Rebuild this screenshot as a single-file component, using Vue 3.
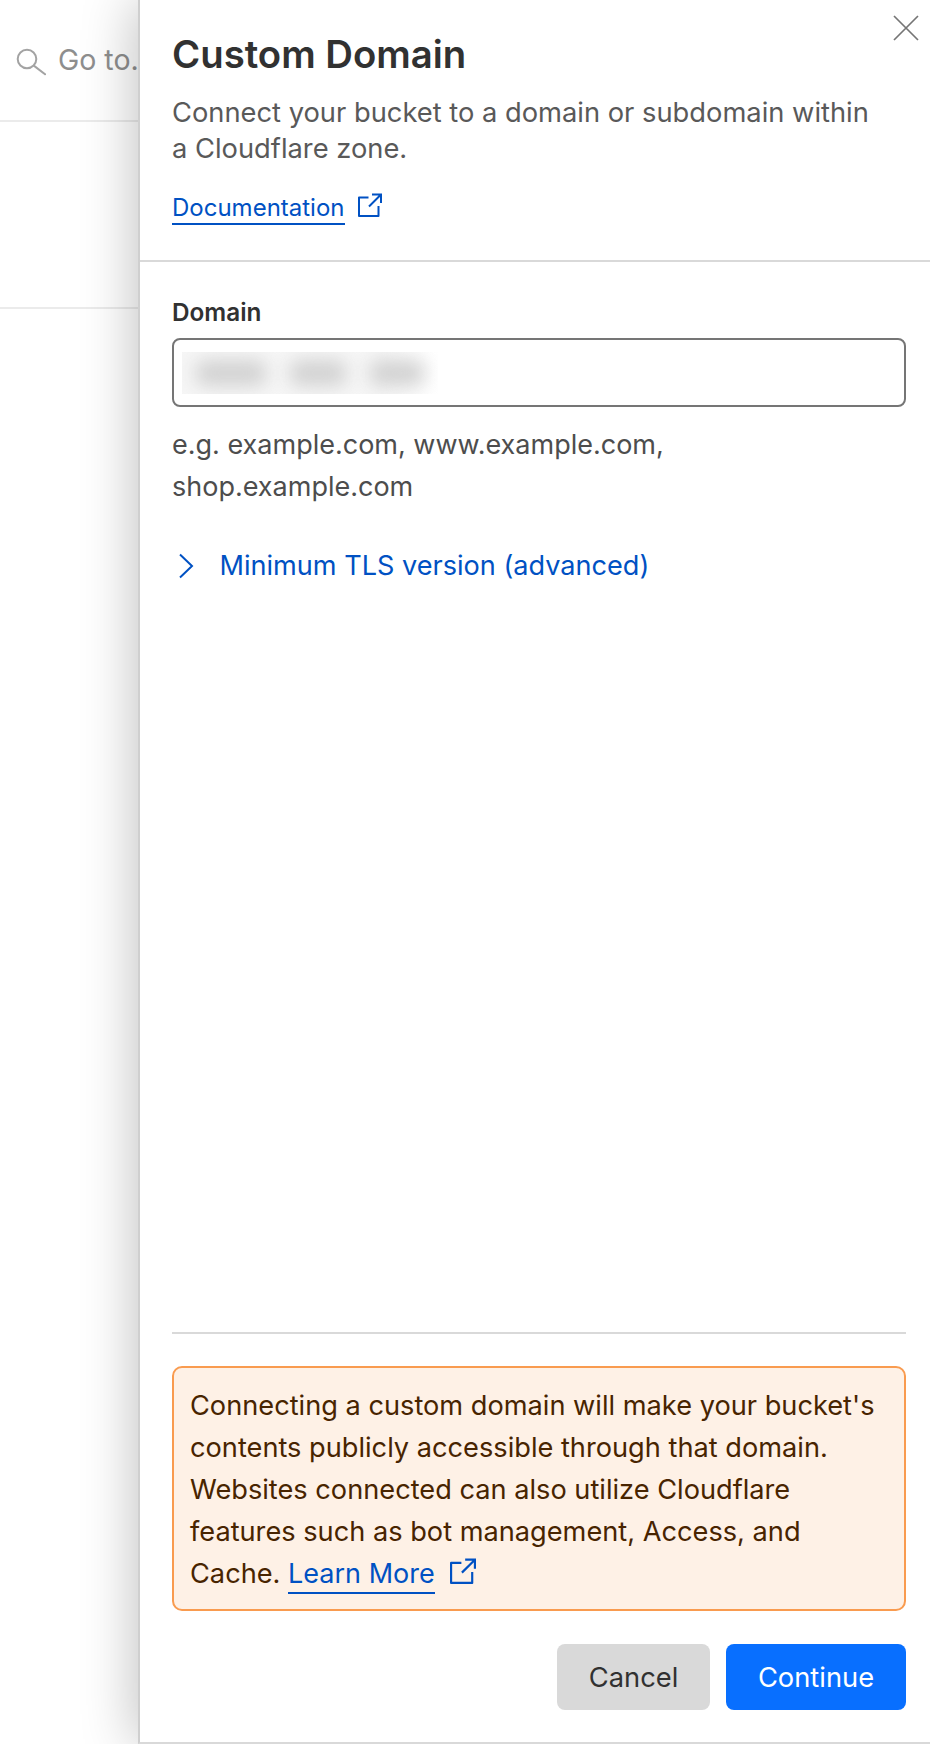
<script setup>
const alertLines = [
  "Connecting a custom domain will make your bucket's",
  'contents publicly accessible through that domain.',
  'Websites connected can also utilize Cloudflare',
  'features such as bot management, Access, and',
]
</script>

<template>
  <div class="page">
    <div class="backdrop">
      <div class="search">
        <svg class="search-icon" width="30" height="30" viewBox="0 0 30 30" fill="none">
          <circle cx="11" cy="13" r="9.3" stroke="#a3a3a3" stroke-width="2" />
          <path d="M17.8 19.6 L29.7 28.7" stroke="#a3a3a3" stroke-width="2" />
        </svg>
        <span class="search-text">Go to.</span>
      </div>
      <div class="back-row"></div>
    </div>

    <aside class="panel">
      <button class="close" aria-label="Close">
        <svg width="26" height="26" viewBox="0 0 26 26" fill="none">
          <path d="M1 1 L25 25 M25 1 L1 25" stroke="#757575" stroke-width="1.7" />
        </svg>
      </button>

      <header class="head">
        <h1>Custom Domain</h1>
        <p class="desc">Connect your bucket to a domain or subdomain within<br />a Cloudflare zone.</p>
        <div class="doc-row">
          <a class="link doc">Documentation</a>
          <svg class="ext" width="24" height="24" viewBox="0 0 24 24" fill="none">
            <path d="M10.5 4.5 H1 V23 H20.5 V13" stroke="#0051c3" stroke-width="2" stroke-linejoin="round" />
            <path d="M11 13.5 L22.5 2 M14 1.5 H23 V10" stroke="#0051c3" stroke-width="2" />
          </svg>
        </div>
      </header>

      <main class="form">
        <label class="label">Domain</label>
        <div class="input">
          <div class="redacted"><i class="a"></i><i class="b"></i><i class="c"></i></div>
        </div>
        <p class="hint">e.g. example.com, www.example.com,<br />shop.example.com</p>
        <div class="advanced">
          <svg width="16" height="26" viewBox="0 0 16 26" fill="none">
            <path d="M2 1.5 L14 13 L2 24.5" stroke="#0051c3" stroke-width="2" />
          </svg>
          <span>Minimum TLS version (advanced)</span>
        </div>
      </main>

      <footer class="foot">
        <div class="alert">
          <template v-for="l in alertLines" :key="l">{{ l }}<br /></template>
          Cache. <a class="link learn">Learn More</a>
          <svg class="ext ext-alert" width="26" height="26" viewBox="0 0 24 24" fill="none">
            <path d="M10.5 4.5 H1 V23 H20.5 V13" stroke="#0051c3" stroke-width="2" stroke-linejoin="round" />
            <path d="M11 13.5 L22.5 2 M14 1.5 H23 V10" stroke="#0051c3" stroke-width="2" />
          </svg>
        </div>
        <div class="actions">
          <button class="btn cancel">Cancel</button>
          <button class="btn primary">Continue</button>
        </div>
      </footer>
    </aside>
  </div>
</template>

<style>
html, body { margin: 0; background: #fff; }
</style>

<style scoped>
.page {
  width: 930px;
  height: 1744px;
  display: flex;
  overflow: hidden;
  background: #fff;
  font-family: Inter, "Liberation Sans", sans-serif;
  color: #313131;
}
.backdrop {
  width: 138px;
  flex: none;
  overflow: hidden;
}
.search {
  height: 122px;
  box-sizing: border-box;
  border-bottom: 2px solid #ebebeb;
  width: 138px;
  padding: 46px 0 0 16px;
  display: flex;
  align-items: flex-start;
  gap: 12px;
  white-space: nowrap;
}
.search-icon { flex: none; }
.search-text {
  font-size: 28.5px;
  line-height: 28px;
  color: #8e8e8e;
}
.back-row {
  height: 187px;
  box-sizing: border-box;
  border-bottom: 2px solid #ebebeb;
}
.panel {
  position: relative;
  width: 792px;
  height: 1744px;
  flex: none;
  box-sizing: border-box;
  background: #fff;
  border-left: 2px solid #cfcfcf;
  border-bottom: 2px solid #d9d9d9;
  box-shadow: -4px 0 50px rgba(0, 0, 0, 0.24);
  display: flex;
  flex-direction: column;
}
.close {
  position: absolute;
  top: 15px;
  right: 11px;
  padding: 0;
  border: 0;
  background: none;
  display: flex;
}
.head {
  height: 262px;
  flex: none;
  box-sizing: border-box;
  border-bottom: 2px solid #d9d9d9;
  padding: 31px 24px 0 32px;
}
h1 {
  margin: 0;
  font-size: 38.3px;
  line-height: 46px;
  font-weight: 600;
  color: #313131;
}
.desc {
  margin: 18px 0 0;
  font-size: 27.3px;
  line-height: 36px;
  color: #595959;
}
.doc-row {
  margin-top: 24px;
  display: flex;
  align-items: flex-start;
  gap: 13px;
}
.link { color: #0051c3; }
.doc {
  font-size: 24px;
  line-height: 33px;
  height: 32px;
  border-bottom: 2px solid #0051c3;
}
.doc-row .ext { margin-top: 2px; }
.form {
  flex: 1;
  padding: 36px 24px 0 32px;
  display: flex;
  flex-direction: column;
}
.label {
  font-size: 24.3px;
  line-height: 28px;
  font-weight: 600;
  color: #313131;
}
.input {
  margin-top: 12px;
  height: 69px;
  box-sizing: border-box;
  border: 2px solid #757575;
  border-radius: 8px;
  position: relative;
}
.redacted {
  position: absolute;
  left: 8px;
  top: 12px;
  width: 256px;
  height: 42px;
  background: linear-gradient(90deg, #f6f6f6 78%, #fff 100%);
  overflow: hidden;
  display: flex;
  align-items: center;
  gap: 22px;
  padding-left: 13px;
  box-sizing: border-box;
}
.redacted i {
  display: block;
  flex: none;
  height: 26px;
  background: #d2d2d2;
  border-radius: 12px;
  filter: blur(9px);
}
.redacted .a { width: 72px; }
.redacted .b { width: 58px; }
.redacted .c { width: 56px; }
.hint {
  margin: 17px 0 0;
  font-size: 27px;
  line-height: 42px;
  color: #4d4d4d;
}
.advanced {
  margin-top: 37px;
  display: flex;
  align-items: center;
  gap: 25.5px;
  padding-left: 6px;
  font-size: 27.1px;
  line-height: 42px;
  color: #0051c3;
}
.foot {
  flex: none;
  margin: 0 24px 32px 32px;
  border-top: 2px solid #d9d9d9;
  padding-top: 32px;
}
.alert {
  box-sizing: border-box;
  height: 245px;
  background: #fef1e6;
  border: 2px solid #f99b4f;
  border-radius: 10px;
  padding: 17px 16px 0 16px;
  font-size: 27.2px;
  line-height: 42px;
  color: #482400;
}
.learn {
  display: inline-block;
  line-height: 36px;
  font-size: 27px;
  border-bottom: 2px solid #0051c3;
}
.ext-alert {
  vertical-align: -1px;
  margin-left: 15px;
}
.actions {
  margin-top: 33px;
  display: flex;
  justify-content: flex-end;
  gap: 16px;
}
.btn {
  height: 66px;
  border: 0;
  border-radius: 8px;
  font-family: inherit;
  font-size: 27.3px;
  padding: 0;
}
.cancel { width: 153px; background: #d9d9d9; color: #313131; }
.primary { width: 180px; background: #086fff; color: #fff; }
</style>
